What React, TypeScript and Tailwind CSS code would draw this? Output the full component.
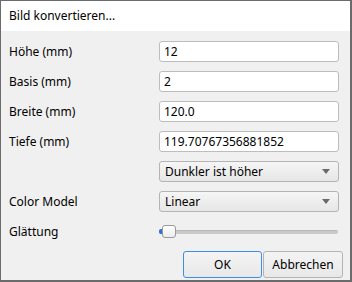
import { useState } from 'react';

const font = { fontFamily: '"Noto Sans", "Liberation Sans", sans-serif' };

const Field = ({ value }: { value: string }) => (
  <div className="h-[21px] w-[180px] rounded-[3px] border border-[#bdbdbd] bg-white pl-[4px] flex items-center text-[12px] text-black">
    {value}
  </div>
);

const Combo = ({ value }: { value: string }) => (
  <div className="h-[21px] w-[180px] rounded-[3px] border border-[#b4b4b4] bg-gradient-to-b from-[#f6f6f6] to-[#e6e6e6] pl-[5px] pr-[8px] flex items-center justify-between text-[12px] text-black">
    <span>{value}</span>
    <svg width="8" height="5" viewBox="0 0 8 5">
      <path d="M0 0 H8 L4 5 Z" fill="#6a6a6a" />
    </svg>
  </div>
);

const Label = ({ text }: { text: string }) => (
  <div className="h-[21px] flex items-center text-[12px] text-black">{text}</div>
);

export default function App() {
  const [val] = useState(0);
  return (
    <div className="w-[352px] h-[282px] bg-[#f0f0f0] border-l border-t border-r-2 border-b-2 border-[#6b6b6b] flex flex-col" style={font}>
      <div className="h-[30px] shrink-0 bg-white flex items-center pl-[8px] text-[12px] text-black">
        Bild konvertieren...
      </div>
      <div className="flex flex-col pl-[8px] pt-[10px] gap-[9px]">
        <div className="grid grid-cols-[150px_180px] gap-y-[9px]">
          <Label text="Höhe (mm)" />
          <Field value="12" />
          <Label text="Basis (mm)" />
          <Field value="2" />
          <Label text="Breite (mm)" />
          <Field value="120.0" />
          <Label text="Tiefe (mm)" />
          <Field value="119.70767356881852" />
          <div />
          <Combo value="Dunkler ist höher" />
          <Label text="Color Model" />
          <Combo value="Linear" />
          <Label text="Glättung" />
          <div className="h-[21px] w-[180px] relative flex items-center">
            <div className="h-[4px] w-[179px] rounded-[2px] bg-[#c9c9c9] border-t border-[#b9b9b9]" />
            <div className="absolute left-0 top-[8px] h-[5px] w-[4px] rounded-l-[2px] bg-[#2f6fd8]" style={{ width: 4 + val }} />
            <div className="absolute left-[3px] top-[4px] h-[13px] w-[14px] rounded-[3px] border border-[#9a9a9a] bg-gradient-to-b from-white to-[#ececec]" />
          </div>
        </div>
        <div className="flex justify-end pr-[7px] gap-[1px]">
          <button className="h-[27px] w-[79px] rounded-[3px] border border-[#3d8ee6] bg-gradient-to-b from-[#f4f4f4] to-[#e8e8e8] text-[12px] text-black">
            OK
          </button>
          <button className="h-[27px] w-[80px] rounded-[3px] border border-[#b4b4b4] bg-gradient-to-b from-[#f4f4f4] to-[#e8e8e8] text-[12px] text-black">
            Abbrechen
          </button>
        </div>
      </div>
    </div>
  );
}
